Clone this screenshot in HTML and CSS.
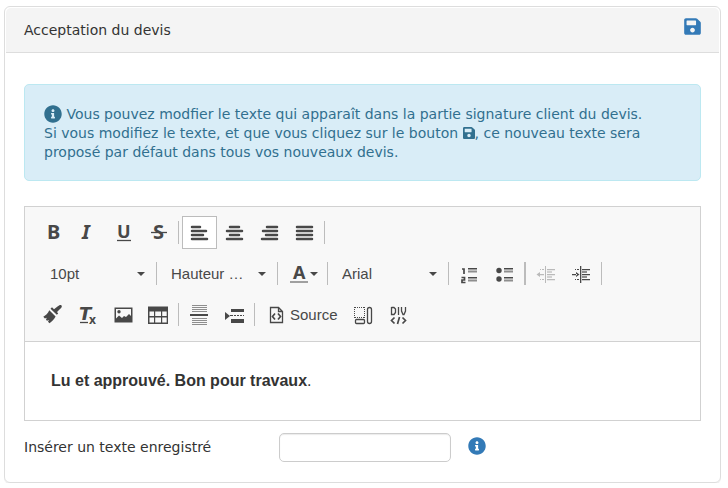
FILE: index.html
```html
<!DOCTYPE html>
<html lang="fr">
<head>
<meta charset="utf-8">
<meta name="viewport" content="width=device-width, initial-scale=1">
<title>Acceptation du devis</title>
<link rel="stylesheet" href="styles.css">
</head>
<body>
<svg class="defs" aria-hidden="true">
  <symbol id="save" viewBox="0 0 448 512"><path d="M433.941 129.941l-83.882-83.882A48 48 0 0 0 316.118 32H48C21.49 32 0 53.49 0 80v352c0 26.51 21.49 48 48 48h352c26.51 0 48-21.49 48-48V163.882a48 48 0 0 0-14.059-33.941zM224 416c-35.346 0-64-28.654-64-64 0-35.346 28.654-64 64-64s64 28.654 64 64c0 35.346-28.654 64-64 64zm96-304.52V212c0 6.627-5.373 12-12 12H76c-6.627 0-12-5.373-12-12V108c0-6.627 5.373-12 12-12h228.52c3.183 0 6.235 1.264 8.485 3.515l3.48 3.48A11.996 11.996 0 0 1 320 111.48z"/></symbol>
  <symbol id="info" viewBox="0 0 512 512"><path d="M256 8C119.043 8 8 119.083 8 256c0 136.997 111.043 248 248 248s248-111.003 248-248C504 119.083 392.957 8 256 8zm0 110c23.196 0 42 18.804 42 42s-18.804 42-42 42-42-18.804-42-42 18.804-42 42-42zm56 254c0 6.627-5.373 12-12 12h-88c-6.627 0-12-5.373-12-12v-24c0-6.627 5.373-12 12-12h12v-64h-12c-6.627 0-12-5.373-12-12v-24c0-6.627 5.373-12 12-12h64c6.627 0 12 5.373 12 12v100h12c6.627 0 12 5.373 12 12v24z"/></symbol>
</svg>
<section class="panel">
  <header class="panel-header">
    <h1>Acceptation du devis</h1>
    <button class="icon-button" type="button" aria-label="Enregistrer"><svg class="save-icon"><use href="#save"/></svg></button>
  </header>
  <div class="panel-body">
    <p class="alert"><svg class="info-icon"><use href="#info"/></svg> Vous pouvez modfier le texte qui apparaît dans la partie signature client du devis.<br>
      Si vous modifiez le texte, et que vous cliquez sur le bouton <svg class="save-inline"><use href="#save"/></svg>, ce nouveau texte sera proposé par défaut dans tous vos nouveaux devis.</p>

    <div class="editor">
      <div class="toolbar" role="toolbar" aria-label="Mise en forme">
        <div class="tool-row">
          <button class="tool" type="button" aria-label="Gras"><svg><text class="glyph" x="4" y="17">B</text></svg></button>
          <button class="tool" type="button" aria-label="Italique"><svg><text class="glyph-serif" x="4" y="17">I</text></svg></button>
          <button class="tool" type="button" aria-label="Souligné"><svg><text class="glyph-small" x="4" y="16">U</text><path class="line" d="M4 18.500h14"/></svg></button>
          <button class="tool" type="button" aria-label="Barré"><svg><text class="glyph" x="5" y="17">S</text><path class="line" d="M3 10.500h16"/></svg></button>
          <span class="separator"></span>
          <button class="tool active" type="button" aria-label="Aligner à gauche" aria-pressed="true"><svg><path class="lines" d="M3 5h8M3 9h14M3 13h11M3 17h15"/></svg></button>
          <button class="tool" type="button" aria-label="Centrer"><svg><path class="lines" d="M6 5h9M3 9h15M6 13h9M3 17h15"/></svg></button>
          <button class="tool" type="button" aria-label="Aligner à droite"><svg><path class="lines" d="M8 5h10M4 9h14M7 13h11M3 17h15"/></svg></button>
          <button class="tool" type="button" aria-label="Justifier"><svg><path class="lines" d="M3 5h15M3 9h15M3 13h15M3 17h15"/></svg></button>
          <span class="separator"></span>
        </div>
        <div class="tool-row combo-row">
          <span class="combo"><select aria-label="Taille"><option>10pt</option></select></span>
          <span class="separator"></span>
          <span class="combo"><select aria-label="Hauteur de ligne"><option>Hauteur …</option></select></span>
          <span class="separator"></span>
          <button class="tool color-tool" type="button" aria-label="Couleur du texte"><svg><text class="glyph-a" x="4" y="16">A</text><path class="bar" d="M1 18h18v2H1z"/></svg><span class="caret"></span></button>
          <span class="separator"></span>
          <span class="combo"><select aria-label="Police"><option>Arial</option></select></span>
          <span class="separator"></span>
          <button class="tool" type="button" aria-label="Liste numérotée"><svg><path class="thick" d="M3 6h2v5M2.500 14.500h3v2.500h-2.500v2.500h3.500"/><path d="M9 5h9v1.500H9zM9 14h9v1.500H9z"/><path class="soft" d="M9 7.500h9v2H9zM9 16.500h9v2H9z"/></svg></button>
          <button class="tool" type="button" aria-label="Liste à puces"><svg><circle cx="5" cy="7.500" r="2.700"/><circle cx="5" cy="16" r="2.700"/><path d="M10 5h9v1.500h-9zM10 14h9v1.500h-9z"/><path class="soft" d="M10 7.500h9v2h-9zM10 16.500h9v2h-9z"/></svg></button>
          <span class="separator double"></span>
          <button class="tool" type="button" aria-label="Diminuer le retrait" disabled><svg><path d="M9 3h1v17H9zM11 6h8v1.200h-8zM11 11h8v1.200h-8zM11 16h8v1.200h-8zM4 6h1v1H4zM6 6h2v1H6zM4 16h1v1H4zM6 16h2v1H6zM3 11h5v1.200H3zM4 9v5l-3.500-2.500z"/><path class="soft" d="M11 8h5v2h-5zM11 13h5v2h-5z"/></svg></button>
          <button class="tool" type="button" aria-label="Augmenter le retrait"><svg><path d="M9 3h1.300v17H9zM11 6h8v1.200h-8zM11 11h8v1.200h-8zM11 16h8v1.200h-8zM4 6h1v1H4zM6 6h2v1H6zM4 16h1v1H4zM6 16h2v1H6zM1 11h5v1.200H1zM5 9v5l3.500-2.500z"/><path class="soft" d="M11 8h5v2h-5zM11 13h5v2h-5z"/></svg></button>
          <span class="separator"></span>
        </div>
        <div class="tool-row">
          <button class="tool" type="button" aria-label="Copier la mise en forme"><svg><path d="M18.500 1.500c1 1-.2 2.500-1.500 3.500l-3 3 1.200 1.400-1.400 1.400-6.300-6 1.500-1.500L11 5.200l3.500-2.700c1.500-1 3-2 4-1z"/><path d="M6.300 6.200l6.300 6.200c-1.500 2.800-3.500 5-6.100 6.800l-1.500-1.500 1-1.700-2 .7-1-1 .7-1.900-1.800.8-1.600-1.800c2.500-1.500 4.500-3.500 6-6.600z"/></svg></button>
          <button class="tool" type="button" aria-label="Supprimer la mise en forme"><svg><text class="glyph-t" x="1" y="16">T</text><path class="line" d="M2 18.500h8"/><text class="glyph-x" x="11" y="20">x</text></svg></button>
          <button class="tool" type="button" aria-label="Image"><svg><path fill-rule="evenodd" d="M1.500 3.500h18v15h-18zM3 5v12h15V5z"/><circle cx="6" cy="7.800" r="1.700"/><path d="M3 17.500v-3l3-3 3 2.500 2-2 2 1 3-3 2 2v5.500z"/></svg></button>
          <button class="tool" type="button" aria-label="Tableau"><svg><path fill-rule="evenodd" d="M0 2.500h20V20H0zM1.500 7.500V12H6V7.500zM7.200 7.500V12H13V7.500zM14.200 7.500V12h4.500V7.500zM1.500 13.500v5H6v-5zM7.200 13.500v5H13v-5zM14.200 13.500v5h4.500v-5z"/></svg></button>
          <span class="separator"></span>
          <button class="tool" type="button" aria-label="Ligne horizontale"><svg><path d="M1 10h18v2H1z"/><path class="soft" d="M3 1h15v1H3zM3 3h15v1H3zM3 5h15v1H3zM3 7h15v1H3zM3 14h15v1H3zM3 16h15v1H3zM3 18h15v1H3zM3 20h15v1H3z"/></svg></button>
          <button class="tool" type="button" aria-label="Saut de page"><svg><path d="M1 8l5 4-5 4zM7 5h13v3H7zM7 15h13v4H7zM6 11h3v1H6zM10 11h2v1h-2zM13 11h2v1h-2zM16 11h2v1h-2zM19 11h1v1h-1z"/></svg></button>
          <span class="separator"></span>
          <button class="tool source-tool" type="button"><svg><path class="outline" d="M4.500 3.500h8l4 4v11h-12zM12.500 3.500v4h4"/><path class="thick" d="M9 9.500L6.500 12.500 9 15.500M12 9.500l2.500 3-2.500 3"/></svg>Source</button>
          <button class="tool" type="button" aria-label="Afficher les blocs"><svg><path class="dotted" d="M2 3.500h10M2 13.500h10M1.500 3v11M11.500 3v11"/><rect class="outline" x="2.500" y="15.500" width="9" height="4" rx="1"/><rect class="outline" x="14.500" y="3.500" width="4" height="16" rx="2"/></svg></button>
          <button class="tool" type="button" aria-label="Créer un conteneur DIV"><svg><path class="outline" d="M3.500 3v7.500h2.500l1.500-2V5L6 3.500H3.500M10.500 3v8M13.500 3v4l1.500 3.500h1L17.500 7V3"/><path class="thick" d="M6.500 13.500L3.500 16.500l3 3M14.500 13.500l3 3-3 3M11.500 13l-2 7"/></svg></button>
        </div>
      </div>
      <div class="editor-content" contenteditable="true" role="textbox" aria-label="Texte de signature" spellcheck="false"><strong>Lu et approuvé. Bon pour travaux</strong>.</div>
    </div>

    <div class="form-row">
      <label for="saved-text">Insérer un texte enregistré</label>
      <input id="saved-text" type="text">
      <button class="icon-button" type="button" aria-label="Aide"><svg class="info-icon"><use href="#info"/></svg></button>
    </div>
  </div>
</section>
</body>
</html>
```

FILE: styles.css
```css
* { box-sizing: border-box; }

body {
  margin: 6px 7px 5px 4px;
  background: #fff;
  color: #333;
  font: 14px/19px "DejaVu Sans", Verdana, sans-serif;
}

button, select, input { font: inherit; color: inherit; }
svg { fill: currentColor; }
.defs { position: absolute; width: 0; height: 0; }

.panel {
  border: 1px solid #ddd;
  border-radius: 6px;
  box-shadow: 0 1px 1px rgba(0, 0, 0, .08);
}

.panel-header {
  display: flex;
  align-items: center;
  justify-content: space-between;
  margin: 1px 1px 0;
  padding: 8px 18px 8px 18px;
  min-height: 45px;
  background: #f4f4f4;
  border-bottom: 1px solid #ddd;
  border-radius: 5px 5px 0 0;
}

.panel-header h1 { margin: 0; font-size: 14px; font-weight: normal; }
.panel-header .icon-button { margin-bottom: 8px; }

.icon-button {
  display: flex;
  padding: 0;
  border: 0;
  background: none;
  color: #337ab7;
  cursor: pointer;
}

.save-icon { width: 17px; height: 19px; }
.info-icon { width: 18px; height: 18px; }

.panel-body { padding: 31px 19px 20px; }

.alert {
  margin: 0 0 25px;
  padding: 20px 19px 18px;
  border: 1px solid #bce8f1;
  border-radius: 5px;
  background: #d9edf7;
  color: #31708f;
}

.alert .info-icon { vertical-align: -4px; margin-top: -2px; }
.save-inline { width: 12px; height: 14px; vertical-align: -2px; }

.editor { border: 1px solid #d1d1d1; }

.toolbar {
  display: flex;
  flex-direction: column;
  gap: 8px;
  padding: 9px 11px 10px;
  background: #f8f8f8;
  border-bottom: 1px solid #d1d1d1;
  color: #484848;
  font: 15px/17px "Liberation Sans", Arial, sans-serif;
}

.tool-row { display: flex; align-items: center; }
.combo-row { padding-left: 3px; }

.tool {
  display: flex;
  align-items: center;
  justify-content: center;
  width: 35px;
  height: 33px;
  padding: 0;
  border: 1px solid transparent;
  background: none;
}

.tool svg { width: 21px; height: 21px; flex: none; overflow: visible; }
.tool.active { background: #fff; border-color: #bcbcbc; }
.tool:disabled { color: #484848; opacity: .35; }

.separator {
  width: 1px;
  height: 23px;
  margin: 0 3px 0 2px;
  background: #bcbcbc;
}

.separator.double { width: 2px; }

.combo { position: relative; width: 115px; }

.combo select {
  width: 100%;
  height: 33px;
  padding: 0 20px 0 11px;
  border: 0;
  appearance: none;
  background: none;
}

.caret,
.combo::after {
  border: 4px solid transparent;
  border-top-color: #484848;
  border-bottom: 0;
}

.combo::after {
  content: "";
  position: absolute;
  top: 15px;
  right: 9px;
  pointer-events: none;
}

.color-tool { width: 44px; }
.source-tool { width: auto; gap: 3px; padding: 0 7px; }

.glyph { font: bold 20px "Noto Sans", sans-serif; }
.glyph-serif { font: italic bold 20px "Noto Sans", sans-serif; }
.glyph-small { font: bold 18px "Noto Sans", sans-serif; }
.glyph-a { font: bold 18px "Noto Sans", sans-serif; }
.glyph-t { font: italic bold 18px "DejaVu Sans", sans-serif; }
.glyph-x { font: bold 12px "Noto Sans", sans-serif; }

.line, .outline, .dotted, .thick, .lines { fill: none; stroke: currentColor; }
.line, .outline { stroke-width: 1.3px; }
.thick { stroke-width: 1.7px; }
.lines { stroke-width: 2.5px; stroke-linecap: round; }
.dotted { stroke-dasharray: 1 1; }
.soft { opacity: .6; }
.bar { fill: #a0a0a0; }

.editor-content {
  padding: 29px 26px 30px;
  font: 16px/19px "Liberation Sans", Arial, sans-serif;
}

.form-row { display: flex; align-items: center; margin-top: 12px; }
.form-row label { width: 255px; }

.form-row input {
  width: 172px;
  height: 29px;
  margin-right: 17px;
  padding: 4px 8px;
  border: 1px solid #ccc;
  border-radius: 5px;
  background: #fff;
  box-shadow: inset 0 1px 1px rgba(0, 0, 0, .08);
}

.form-row .icon-button { margin-bottom: 3px; }
```
